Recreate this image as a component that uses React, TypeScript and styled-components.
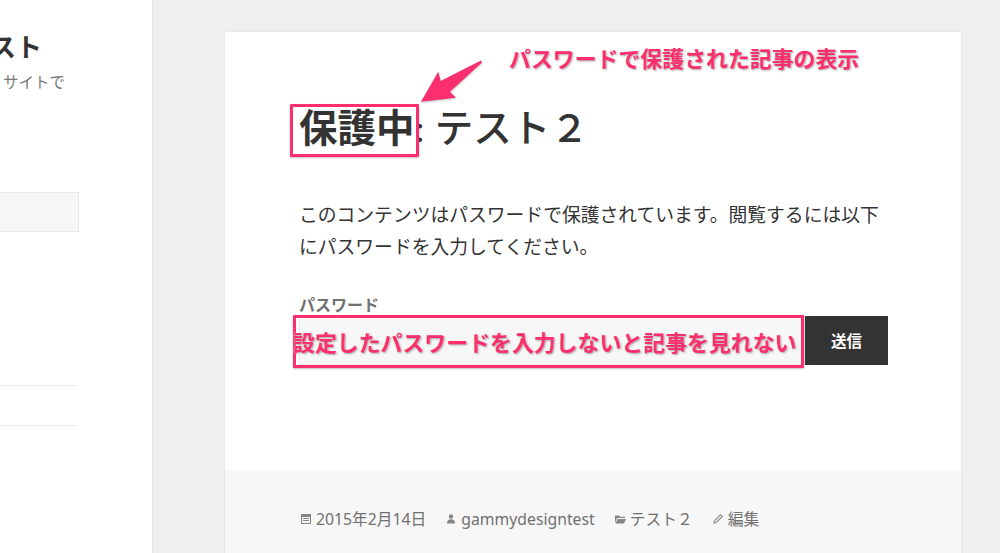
import styled, { createGlobalStyle } from "styled-components";

const GlobalStyle = createGlobalStyle`
  html, body {
    margin: 0;
    padding: 0;
    background: #efefef;
  }
  body {
    font-family: "Noto Sans", "Noto Sans CJK JP", sans-serif;
  }
`;

const SERIF = `"Liberation Serif", "Noto Sans CJK JP", serif`;
const PINK = "#fb2f6e";

const Page = styled.div`
  display: flex;
  width: 1000px;
  height: 553px;
  overflow: hidden;
`;

const Sidebar = styled.aside`
  flex: 0 0 153px;
  box-sizing: border-box;
  background: #fff;
  border-right: 1px solid #e6e6e6;
  padding-top: 29px;
`;

const SiteTitle = styled.h1`
  margin: 0 0 0 -36px;
  font-size: 26px;
  line-height: 36px;
  font-weight: 700;
  color: #333;
  white-space: nowrap;
`;

const SiteDescription = styled.p`
  margin: 2px 0 0 3px;
  font-size: 15.5px;
  line-height: 30px;
  color: #777;
  white-space: nowrap;
`;

const SearchBox = styled.div`
  width: 79px;
  height: 40px;
  box-sizing: border-box;
  margin-top: 95px;
  background: #f7f7f7;
  border: 1px solid #e8e8e8;
  border-left: 0;
`;

const WidgetList = styled.div`
  width: 78px;
  margin-top: 153px;
`;

const WidgetRow = styled.div`
  height: 40px;
  box-sizing: border-box;
  border-top: 1px solid #eaeaea;
`;

const Main = styled.main`
  flex: 1;
  padding: 32px 39px 0 72px;
`;

const Card = styled.article`
  background: #fff;
  height: 521px;
  display: flex;
  flex-direction: column;
  box-shadow: 0 0 1px rgba(0, 0, 0, 0.15);
`;

const CardBody = styled.div`
  position: relative;
  flex: 0 0 438px;
  box-sizing: border-box;
  padding: 72px 73px 0 74px;
`;

const PostTitle = styled.h2`
  position: relative;
  margin: 0;
  font-family: ${SERIF};
  font-size: 38.5px;
  line-height: 50px;
  font-weight: 500;
  color: #333;
  white-space: nowrap;
`;

const Protected = styled.span`
  position: relative;
  font-weight: 700;
`;

const TitleMark = styled.span`
  position: absolute;
  left: -9px;
  top: -4px;
  width: 129px;
  height: 53px;
  box-sizing: border-box;
  border: 3px solid ${PINK};
  border-radius: 1px;
  box-shadow: 0 1px 2px rgba(0, 0, 0, 0.25);
`;

const Arrow = styled.svg`
  position: absolute;
  left: 192px;
  top: 24px;
  filter: drop-shadow(0 1px 1px rgba(0, 0, 0, 0.25));
`;

const Callout = styled.div`
  position: absolute;
  left: 284px;
  top: 12px;
  font-size: 21.9px;
  line-height: 30px;
  font-weight: 700;
  color: ${PINK};
  white-space: nowrap;
  text-shadow: 1px 1px 2px rgba(0, 0, 0, 0.35), 0 0 2px #fff;
`;

const Paragraph = styled.p`
  margin: 46px 0 0;
  font-family: ${SERIF};
  font-size: 18.8px;
  line-height: 32px;
  color: #333;
`;

const FieldLabel = styled.label`
  display: block;
  margin-top: 31px;
  font-size: 16px;
  line-height: 20px;
  font-weight: 700;
  color: #707070;
`;

const PasswordRow = styled.div`
  position: relative;
  display: flex;
  height: 49px;
  margin-top: 1px;
`;

const PasswordInput = styled.div`
  flex: 1;
  background: #f7f7f7;
  border: 1px solid #eaeaea;
`;

const SubmitButton = styled.button`
  flex: 0 0 83px;
  border: 0;
  padding: 0;
  background: #333;
  color: #fff;
  font-family: inherit;
  font-size: 15.5px;
  font-weight: 700;
`;

const InputMark = styled.div`
  position: absolute;
  left: -6px;
  top: -1px;
  width: 511px;
  height: 53px;
  box-sizing: border-box;
  display: flex;
  align-items: center;
  border: 3px solid ${PINK};
  border-radius: 1px;
  box-shadow: 0 1px 2px rgba(0, 0, 0, 0.25);
`;

const InputMarkText = styled.span`
  margin-left: -3px;
  font-size: 21.9px;
  font-weight: 700;
  color: ${PINK};
  white-space: nowrap;
  text-shadow: 1px 1px 2px rgba(0, 0, 0, 0.35), 0 0 2px #fff;
`;

const CardFooter = styled.footer`
  flex: 1;
  display: flex;
  align-items: flex-start;
  gap: 19px;
  padding: 39px 0 0 75px;
  background: #f7f7f7;
`;

const MetaItem = styled.span`
  display: inline-flex;
  align-items: center;
  gap: 4px;
  font-size: 15.75px;
  line-height: 20px;
  color: #707070;
  white-space: nowrap;
`;

const MetaIcon = styled.svg`
  flex: none;
  width: 12px;
  height: 12px;
  fill: #858585;
`;

const App = () => {
  return (
    <>
      <GlobalStyle />
      <Page>
        <Sidebar>
          <SiteTitle>テスト</SiteTitle>
          <SiteDescription>サイトで</SiteDescription>
          <SearchBox />
          <WidgetList>
            <WidgetRow />
            <WidgetRow />
          </WidgetList>
        </Sidebar>
        <Main>
          <Card>
            <CardBody>
              <PostTitle>
                <Protected>
                  保護中
                  <TitleMark />
                </Protected>
                : テスト２
              </PostTitle>
              <Arrow width="70" height="52" viewBox="0 0 70 52">
                <path
                  d="M4 45.7 L21.3 15.7 L23.7 25 L64 4.5 L65 6.5 L33 35.7 L39 41.7 Z"
                  fill={PINK}
                />
              </Arrow>
              <Callout>パスワードで保護された記事の表示</Callout>
              <Paragraph>
                このコンテンツはパスワードで保護されています。閲覧するには以下にパスワードを入力してください。
              </Paragraph>
              <FieldLabel>パスワード</FieldLabel>
              <PasswordRow>
                <PasswordInput />
                <SubmitButton>送信</SubmitButton>
                <InputMark>
                  <InputMarkText>設定したパスワードを入力しないと記事を見れない</InputMarkText>
                </InputMark>
              </PasswordRow>
            </CardBody>
            <CardFooter>
              <MetaItem>
                <MetaIcon viewBox="0 0 12 12">
                  <path d="M1 1h10v10H1z M2 4v6h8V4z M3 5h6v1H3z M3 7h6v1H3z" fillRule="evenodd" />
                </MetaIcon>
                2015年2月14日
              </MetaItem>
              <MetaItem>
                <MetaIcon viewBox="0 0 12 12">
                  <circle cx="6" cy="3.5" r="2.2" />
                  <path d="M2 10.5c0-3 1.5-4.2 4-4.2s4 1.2 4 4.2z" />
                </MetaIcon>
                gammydesigntest
              </MetaItem>
              <MetaItem>
                <MetaIcon viewBox="0 0 12 12">
                  <path d="M1 2.5h4l1 1.2h5V5H3L1 10z M3.5 6H12l-2 4.5H1.5z" />
                </MetaIcon>
                テスト２
              </MetaItem>
              <MetaItem>
                <MetaIcon viewBox="0 0 12 12">
                  <path
                    d="M8.5 1 11 3.5 4.5 10 1.2 10.8 2 7.5z M8.5 2.6 3 8 2.6 9.4 4 9 9.4 3.5z"
                    fillRule="evenodd"
                  />
                </MetaIcon>
                編集
              </MetaItem>
            </CardFooter>
          </Card>
        </Main>
      </Page>
    </>
  );
};

export default App;
